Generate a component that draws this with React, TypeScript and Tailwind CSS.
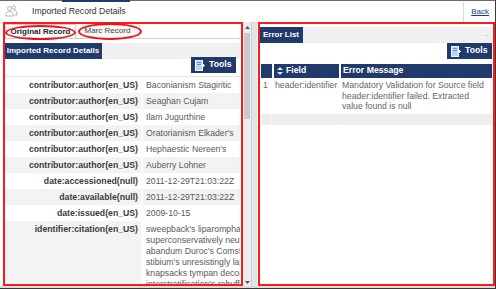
// Imported record details — original record vs. error list, side by side.

const rows: { label: string; value: string }[] = [
  { label: 'contributor:author(en_US)', value: 'Baconianism Stagiritic' },
  { label: 'contributor:author(en_US)', value: 'Seaghan Cujam' },
  { label: 'contributor:author(en_US)', value: 'Ilam Jugurthine' },
  { label: 'contributor:author(en_US)', value: "Oratorianism Elkader's" },
  { label: 'contributor:author(en_US)', value: "Hephaestic Nereen's" },
  { label: 'contributor:author(en_US)', value: 'Auberry Lohner' },
  { label: 'date:accessioned(null)', value: '2011-12-29T21:03:22Z' },
  { label: 'date:available(null)', value: '2011-12-29T21:03:22Z' },
  { label: 'date:issued(en_US)', value: '2009-10-15' },
]

const citation = [
  "sweepback's liparomphalus",
  'superconservatively neutral',
  "abandum Duroc's Comstockery",
  "stibium's unresistingly lapidate",
  'knapsacks tympan decorum',
  "interstratification's rebuff",
]

function ToolsButton() {
  return (
    <button
      type="button"
      className="flex h-[16px] w-[45px] items-center gap-[4px] bg-[#1f3a6b] pl-[4px] text-[8.7px] font-bold text-white"
    >
      <svg width="10" height="11" viewBox="0 0 10 11">
        <rect x="0.5" y="0.5" width="7" height="10" fill="#b9d3f0" stroke="#eef5ff" />
        <rect x="2" y="2" width="4" height="1" fill="#6d93c4" />
        <rect x="2" y="4" width="4" height="1" fill="#6d93c4" />
        <path d="M6 5.5h3.5M8 4l1.5 1.5L8 7" stroke="#ffffff" strokeWidth="1" fill="none" />
      </svg>
      Tools
    </button>
  )
}

function PeopleIcon() {
  return (
    <svg width="13" height="12" viewBox="0 0 13 12" fill="none" stroke="#b5b5b5" strokeWidth="1">
      <circle cx="4.5" cy="3.5" r="2" />
      <path d="M1 11v-1.5c0-1.7 1.5-3 3.5-3s3.5 1.3 3.5 3V11z" />
      <circle cx="9" cy="2.5" r="1.7" />
      <path d="M8.5 5.2c2 0 3.5 1.1 3.5 2.8V10H9" />
    </svg>
  )
}

function SortIcon() {
  return (
    <svg width="6" height="8" viewBox="0 0 6 8" fill="#dfe7f3">
      <path d="M3 0l3 3H0z" />
      <path d="M3 8l3-3H0z" />
    </svg>
  )
}

export default function App() {
  return (
    <div className="relative h-[289px] w-[496px] overflow-hidden bg-white font-['Liberation_Sans',Arial,sans-serif] text-[#333]">
      {/* Page header */}
      <div className="relative flex h-[22px] items-center border-t border-[#6b6b6b]">
        <div className="absolute left-[62px] top-[-1px] h-[2px] w-[68px] bg-[#1f3a6b]" />
        <div className="ml-[5px] mt-[-2px]">
          <PeopleIcon />
        </div>
        <span className="ml-[14px] text-[8.7px] text-[#333]">Imported Record Details</span>
        <div className="ml-auto h-[20px] border-l border-[#d8d8d8]" />
        <a href="#" className="mx-[7px] text-[8px] text-[#1a3a8a] underline">
          Back
        </a>
      </div>

      {/* Body */}
      <div className="flex h-[264px]">
        {/* Left: original record */}
        <div className="w-[243px] overflow-hidden pl-[4px] pr-[3px] pt-[2px]">
          <div className="flex h-[15px] items-stretch border-b border-[#cfcfcf] text-[8px]">
            <div className="ml-[1px] flex w-[71px] items-center justify-center border border-b-0 border-[#cfcfcf] bg-white font-bold text-[#222]">
              Original Record
            </div>
            <div className="flex w-[64px] items-center justify-center border-r border-[#e2e2e2] bg-[#f7f7f7] text-[#444]">
              Marc Record
            </div>
          </div>
          <div className="mt-[4px] flex h-[16px] bg-[#f0f0f0]">
            <div className="flex w-[98px] items-center justify-center bg-[#1f3a6b] text-[8px] font-bold text-white">
              Imported Record Details
            </div>
          </div>
          <div className="flex h-[18px] items-start justify-end border-b border-[#e3e3e3] pr-[4px]">
            <div className="-mt-[2px]">
              <ToolsButton />
            </div>
          </div>
          <div className="text-[8.7px] leading-[16px]">
            {rows.map((r, i) => (
              <div key={i} className={`flex h-[16px] ${i % 2 === 1 ? 'bg-[#f3f3f3]' : 'bg-white'}`}>
                <div className="w-[137px] whitespace-nowrap pr-[3px] text-right font-bold text-[#3a3a3a]">
                  {r.label}
                </div>
                <div className="w-[2px] bg-white" />
                <div className="flex-1 whitespace-nowrap pl-[3px] text-[#5a5a5a]">{r.value}</div>
              </div>
            ))}
            <div className="flex bg-[#f3f3f3]">
              <div className="w-[137px] whitespace-nowrap pr-[3px] text-right font-bold text-[#3a3a3a]">
                identifier:citation(en_US)
              </div>
              <div className="w-[2px] bg-white" />
              <div className="flex-1 overflow-hidden bg-white pl-[3px] pt-[3px] text-[#5a5a5a] leading-[10.9px]">
                {citation.map((l) => (
                  <div key={l} className="whitespace-nowrap">
                    {l}
                  </div>
                ))}
              </div>
            </div>
          </div>
        </div>

        {/* Scrollbar */}
        <div className="flex w-[8px] flex-col items-center bg-[#eeeeee] pt-[4px] pb-[2px]">
          <svg width="5" height="3" viewBox="0 0 5 3" fill="#555">
            <path d="M2.5 0L5 3H0z" />
          </svg>
          <div className="mt-[4px] h-[86px] w-[6px] bg-[#c9c9c9]" />
          <div className="flex-1" />
          <svg width="5" height="3" viewBox="0 0 5 3" fill="#555">
            <path d="M0 0h5L2.5 3z" />
          </svg>
        </div>

        {/* Splitter */}
        <div className="w-[6px] border-l border-[#cfcfcf] bg-[#e4e4e4]" />

        {/* Right: error list */}
        <div className="flex-1 overflow-hidden pl-[2px] pr-[4px] pt-[5px]">
          <div className="flex h-[16px] items-stretch bg-[#f0f0f0]">
            <div className="flex w-[44px] items-center justify-center bg-[#1f3a6b] text-[8px] font-bold text-white">
              Error List
            </div>
            <div className="ml-auto mr-[5px] mt-[8px] h-[1px] w-[1px] bg-[#999]" />
          </div>
          <div className="flex h-[21px] items-start justify-end">
            <ToolsButton />
          </div>
          <div className="ml-[2px] text-[8.7px]">
            <div className="flex h-[14px] items-stretch gap-[2px] font-bold text-white">
              <div className="w-[11px] bg-[#1f3a6b]" />
              <div className="flex w-[65px] items-center gap-[3px] bg-[#1f3a6b] pl-[3px]">
                <SortIcon />
                Field
              </div>
              <div className="flex flex-1 items-center bg-[#1f3a6b] pl-[2px]">Error Message</div>
            </div>
            <div className="flex gap-[2px] pt-[2px] pb-[2px] text-[#666] leading-[10.6px]">
              <div className="w-[11px] pl-[2px]">1</div>
              <div className="w-[65px] whitespace-nowrap pl-[1px]">header:identifier</div>
              <div className="flex-1 pl-[1px]">
                Mandatory Validation for Source field header:identifier failed. Extracted value found is null
              </div>
            </div>
            <div className="flex h-[11px] gap-[2px] bg-[#eeeeee]">
              <div className="w-[11px] border-r border-[#f8f8f8]" />
              <div className="w-[65px] border-r border-[#f8f8f8]" />
            </div>
          </div>
        </div>
      </div>

      <div className="h-[2px] bg-[#dcdcdc]" />
      <div className="h-[1px] bg-[#3a3a3a]" />
      <div className="absolute right-0 top-0 h-full w-[1px] bg-[#3a3a3a]" />

      {/* Red annotation overlays */}
      <div className="pointer-events-none absolute left-[3px] top-[22px] h-[264px] w-[240px] border-2 border-[#ff1a1a]" />
      <div className="pointer-events-none absolute left-[258px] top-[22px] h-[264px] w-[237px] border-2 border-[#ff1a1a]" />
      <div className="pointer-events-none absolute left-[5px] top-[25px] h-[15px] w-[71px] rounded-[50%] border-2 border-[#e8141c]" />
      <div className="pointer-events-none absolute left-[78px] top-[23px] h-[17px] w-[64px] rounded-[50%] border-2 border-[#e8141c]" />
    </div>
  )
}
